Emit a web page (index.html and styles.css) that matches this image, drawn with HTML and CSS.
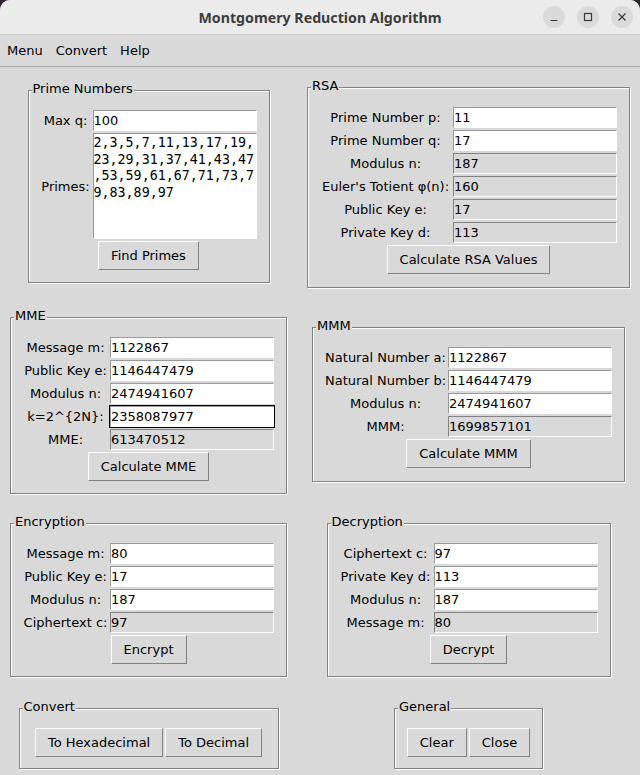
FILE: index.html
```html
<!DOCTYPE html>
<html lang="en">
<head>
<meta charset="utf-8">
<title>Montgomery Reduction Algorithm</title>
<link rel="stylesheet" href="styles.css">
</head>
<body>
<div class="window">
  <header class="titlebar">
    <span class="title">Montgomery Reduction Algorithm</span>
    <div class="wm-buttons">
      <span class="wm-btn"><svg width="10" height="10" viewBox="0 0 10 10"><path d="M1.5 8.5h7" stroke="#3a3a3a" stroke-width="1.2" fill="none"/></svg></span>
      <span class="wm-btn"><svg width="10" height="10" viewBox="0 0 10 10"><rect x="1.5" y="1.5" width="7" height="7" stroke="#3a3a3a" stroke-width="1.2" fill="none"/></svg></span>
      <span class="wm-btn"><svg width="10" height="10" viewBox="0 0 10 10"><path d="M1.5 1.5l7 7M8.5 1.5l-7 7" stroke="#3a3a3a" stroke-width="1.2" fill="none"/></svg></span>
    </div>
  </header>
  <nav class="menubar">
    <span class="menu-item">Menu</span>
    <span class="menu-item">Convert</span>
    <span class="menu-item">Help</span>
  </nav>
  <main class="content">
    <fieldset class="frame frame-primes">
      <legend>Prime Numbers</legend>
      <div class="frame-body form">
        <span class="lbl">Max q:</span><input class="entry" type="text" value="100">
        <span class="lbl">Primes:</span><textarea class="textbox" rows="6">2,3,5,7,11,13,17,19,
23,29,31,37,41,43,47
,53,59,61,67,71,73,7
9,83,89,97</textarea>
        <div class="actions"><button class="btn">Find Primes</button></div>
      </div>
    </fieldset>

    <fieldset class="frame frame-rsa">
      <legend>RSA</legend>
      <div class="frame-body form">
        <span class="lbl">Prime Number p:</span><input class="entry" type="text" value="11">
        <span class="lbl">Prime Number q:</span><input class="entry" type="text" value="17">
        <span class="lbl">Modulus n:</span><input class="entry readonly" type="text" value="187" readonly>
        <span class="lbl">Euler's Totient φ(n):</span><input class="entry readonly" type="text" value="160" readonly>
        <span class="lbl">Public Key e:</span><input class="entry readonly" type="text" value="17" readonly>
        <span class="lbl">Private Key d:</span><input class="entry readonly" type="text" value="113" readonly>
        <div class="actions"><button class="btn">Calculate RSA Values</button></div>
      </div>
    </fieldset>

    <fieldset class="frame frame-mme">
      <legend>MME</legend>
      <div class="frame-body form">
        <span class="lbl">Message m:</span><input class="entry" type="text" value="1122867">
        <span class="lbl">Public Key e:</span><input class="entry" type="text" value="1146447479">
        <span class="lbl">Modulus n:</span><input class="entry" type="text" value="2474941607">
        <span class="lbl">k=2^{2N}:</span><input class="entry focused" type="text" value="2358087977">
        <span class="lbl">MME:</span><input class="entry readonly" type="text" value="613470512" readonly>
        <div class="actions"><button class="btn">Calculate MME</button></div>
      </div>
    </fieldset>

    <fieldset class="frame frame-mmm">
      <legend>MMM</legend>
      <div class="frame-body form">
        <span class="lbl">Natural Number a:</span><input class="entry" type="text" value="1122867">
        <span class="lbl">Natural Number b:</span><input class="entry" type="text" value="1146447479">
        <span class="lbl">Modulus n:</span><input class="entry" type="text" value="2474941607">
        <span class="lbl">MMM:</span><input class="entry readonly" type="text" value="1699857101" readonly>
        <div class="actions"><button class="btn">Calculate MMM</button></div>
      </div>
    </fieldset>

    <fieldset class="frame frame-enc">
      <legend>Encryption</legend>
      <div class="frame-body form">
        <span class="lbl">Message m:</span><input class="entry" type="text" value="80">
        <span class="lbl">Public Key e:</span><input class="entry" type="text" value="17">
        <span class="lbl">Modulus n:</span><input class="entry" type="text" value="187">
        <span class="lbl">Ciphertext c:</span><input class="entry readonly" type="text" value="97" readonly>
        <div class="actions"><button class="btn">Encrypt</button></div>
      </div>
    </fieldset>

    <fieldset class="frame frame-dec">
      <legend>Decryption</legend>
      <div class="frame-body form">
        <span class="lbl">Ciphertext c:</span><input class="entry" type="text" value="97">
        <span class="lbl">Private Key d:</span><input class="entry" type="text" value="113">
        <span class="lbl">Modulus n:</span><input class="entry" type="text" value="187">
        <span class="lbl">Message m:</span><input class="entry readonly" type="text" value="80" readonly>
        <div class="actions"><button class="btn">Decrypt</button></div>
      </div>
    </fieldset>

    <fieldset class="frame frame-convert">
      <legend>Convert</legend>
      <div class="frame-body button-row">
        <button class="btn">To Hexadecimal</button>
        <button class="btn">To Decimal</button>
      </div>
    </fieldset>

    <fieldset class="frame frame-general">
      <legend>General</legend>
      <div class="frame-body button-row">
        <button class="btn">Clear</button>
        <button class="btn">Close</button>
      </div>
    </fieldset>
  </main>
</div>
</body>
</html>
```

FILE: styles.css
```css
* {
  box-sizing: border-box;
}

html {
  background: #2e2531;
}

body {
  margin: 0;
  font-family: "DejaVu Sans", "Liberation Sans", sans-serif;
  font-size: 13px;
  color: #000;
}

.window {
  width: 640px;
  height: 775px;
  background: #d9d9d9;
  border-radius: 10px 10px 0 0;
  overflow: hidden;
}

/* ---------- title bar ---------- */
.titlebar {
  height: 35px;
  background: #ebebeb;
  border-bottom: 1px solid #cdcdcd;
  display: grid;
  grid-template-columns: 1fr auto 1fr;
  align-items: center;
}

.title {
  grid-column: 2;
  font-family: "Noto Sans", "DejaVu Sans", sans-serif;
  font-weight: 700;
  font-size: 14.2px;
  color: #3d3d3d;
}

.wm-buttons {
  grid-column: 3;
  justify-self: end;
  display: flex;
  gap: 12px;
  margin-right: 7px;
}

.wm-btn {
  width: 22px;
  height: 22px;
  border-radius: 50%;
  background: #dadada;
  display: grid;
  place-items: center;
}

.wm-btn svg {
  display: block;
}

/* ---------- menu bar ---------- */
.menubar {
  height: 32px;
  border-bottom: 1px solid #a6a6a6;
  display: flex;
  align-items: center;
  gap: 13px;
  padding-left: 7px;
}

/* ---------- layout ---------- */
.content {
  display: grid;
  grid-template-columns: 297px 343px;
  grid-template-rows: 232px 204px 187px 90px;
  align-items: center;
  justify-items: center;
}

/* ---------- label frames ---------- */
.frame {
  margin: 0;
  padding: 0;
  min-width: 0;
  border: 1px solid #828282;
  box-shadow: 1px 1px 0 #fff, inset 1px 1px 0 #fff;
}

.frame legend {
  margin-left: 3px;
  padding: 0 1px 4px;
  line-height: 11px;
  background: #d9d9d9;
}

.frame-primes { width: 242px; }
.frame-rsa { width: 323px; margin-top: 2px; }
.frame-mme { width: 277px; margin-top: 2px; }
.frame-mmm { width: 313px; }
.frame-enc { width: 277px; }
.frame-dec { width: 284px; }
.frame-convert { width: 260px; }
.frame-general { width: 149px; }

.frame-body {
  padding: 11px;
}

.form {
  display: grid;
  grid-template-columns: 1fr 166px;
}

.frame-rsa .frame-body,
.frame-mmm .frame-body {
  padding-bottom: 12px;
}

.lbl {
  justify-self: center;
  align-self: center;
  white-space: nowrap;
}

/* ---------- entries ---------- */
.entry {
  margin: 1px;
  width: 164px;
  height: 21px;
  padding: 0;
  border: 1px solid;
  border-color: #999 #fff #fff #999;
  background: #fff;
  font: inherit;
  color: #000;
  outline: none;
}

.entry.readonly {
  background: #d9d9d9;
  border-color: #828282 #fff #fff #828282;
}

.entry.focused {
  outline: 1px solid #000;
}

.textbox {
  display: block;
  margin: 1px;
  width: 164px;
  height: 106px;
  padding: 1px 0 0 0;
  border: 1px solid;
  border-color: #999 #fff #fff #999;
  background: #fff;
  font-family: "DejaVu Sans Mono", "Liberation Mono", monospace;
  font-size: 13.33px;
  line-height: 16.67px;
  color: #000;
  resize: none;
  overflow: hidden;
  white-space: pre;
  outline: none;
}

/* ---------- buttons ---------- */
.actions {
  grid-column: 1 / -1;
  display: flex;
  justify-content: center;
}

.btn {
  margin: 1px;
  height: 29px;
  padding: 0 12px;
  border: 1px solid;
  border-color: #fff #828282 #828282 #fff;
  background: #d9d9d9;
  font: inherit;
  line-height: 15px;
  color: #000;
}

.button-row {
  display: flex;
  justify-content: center;
  padding: 11px 11px 10px;
}
```
